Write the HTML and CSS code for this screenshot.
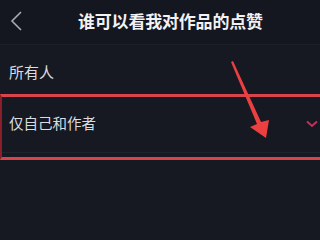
FILE: index.html
```html
<!DOCTYPE html>
<html lang="zh">
<head>
<meta charset="utf-8">
<link rel="stylesheet" href="styles.css">
</head>
<body>
<div class="page">
  <header class="header">
    <svg class="back" width="14" height="22" viewBox="0 0 14 22"><path d="M12 2 L3 11 L12 20" fill="none" stroke="#a9abb2" stroke-width="1.6"/></svg>
    <h1 class="title">谁可以看我对作品的点赞</h1>
  </header>
  <div class="row">所有人</div>
  <div class="row row-sel">
    <span>仅自己和作者</span>
    <svg class="check" width="12" height="8" viewBox="0 0 12 8"><path d="M1 1.5 L6 6 L11 1.5" fill="none" stroke="#c2305c" stroke-width="2"/></svg>
  </div>
  <div class="mark"></div>
  <svg class="arrow" width="320" height="240" viewBox="0 0 320 240">
    <polygon points="231,62 233,61 261,122 269,120 266,138 250,127 257,124" fill="#ec3f40"/>
  </svg>
</div>
</body>
</html>
```
FILE: styles.css
```css
* { box-sizing: border-box; }
html, body { margin: 0; padding: 0; }
body {
  width: 320px;
  height: 240px;
  overflow: hidden;
  background: #161922;
  font-family: "Noto Sans CJK SC", "Noto Sans", sans-serif;
}
.page {
  position: relative;
  width: 320px;
  height: 240px;
}
.header {
  height: 45px;
  display: flex;
  align-items: center;
  background: #141620;
  border-bottom: 1px solid #1c1f2a;
  padding-left: 9px;
}
.back { flex: none; margin-top: -2px; }
.title {
  margin: -4px 0 0 55px;
  font-size: 17px;
  font-weight: 700;
  color: #f2f2f4;
  letter-spacing: -0.2px;
}
.row {
  height: 52px;
  display: flex;
  align-items: center;
  padding-left: 9px;
  font-size: 15px;
  color: #dcdde0;
}
.row-sel {
  height: 56px;
  padding-bottom: 4px;
  justify-content: space-between;
  padding-right: 2px;
  border-bottom: 1px solid #1f222d;
  font-size: 14.5px;
}
.check { flex: none; margin-top: 2px; }
.mark {
  position: absolute;
  left: 0;
  top: 94px;
  width: 330px;
  height: 66px;
  border: 3px solid #d9434b;
  border-left: 2px solid #8a1f2a;
}
.arrow {
  position: absolute;
  left: 0;
  top: 0;
}
```
